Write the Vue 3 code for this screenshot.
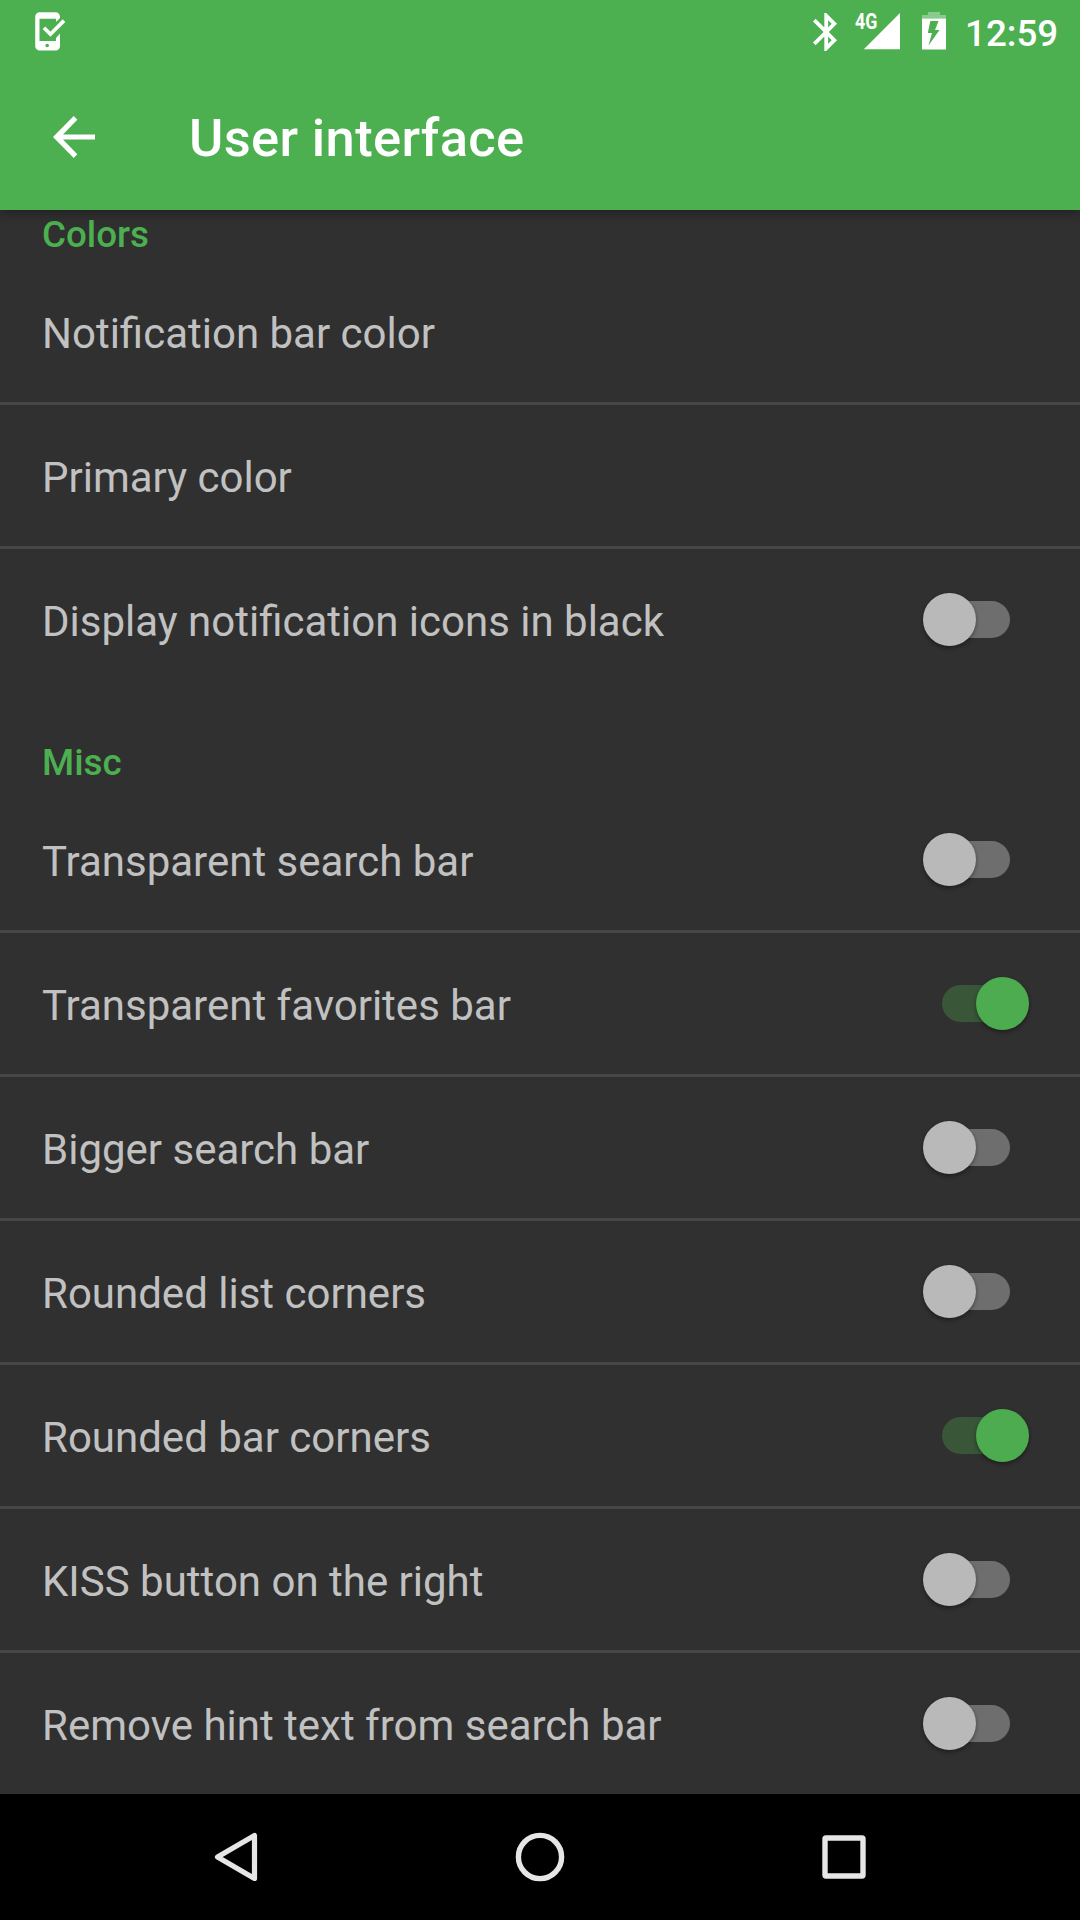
<script setup>
const sections = [
  {
    title: 'Colors',
    items: [
      { label: 'Notification bar color' },
      { label: 'Primary color' },
      { label: 'Display notification icons in black', on: false },
    ],
  },
  {
    title: 'Misc',
    items: [
      { label: 'Transparent search bar', on: false },
      { label: 'Transparent favorites bar', on: true },
      { label: 'Bigger search bar', on: false },
      { label: 'Rounded list corners', on: false },
      { label: 'Rounded bar corners', on: true },
      { label: 'KISS button on the right', on: false },
      { label: 'Remove hint text from search bar', on: false },
    ],
  },
]
</script>

<template>
  <div class="screen">
    <header class="top">
      <div class="status">
        <svg class="task" width="32" height="42" viewBox="0 0 32 42">
          <path fill="#fff" fill-rule="evenodd" d="M6 2.3H20.500C23 2.300 25 4.300 25 6.800V8L21.500 11.500H21V8.700H4.500V31H21V28L25 23.500V36C25 38.500 23 40.600 20.500 40.600H5C2.300 40.600 .2 38.500 .2 36V6.800C.2 4.300 2.300 2.300 5 2.300Z" />
          <path fill="none" stroke="#fff" stroke-width="3.700" d="M9 17.800L15.400 24.200L29 10.600" />
          <circle cx="12.200" cy="35.500" r="1.800" fill="#4caf50" />
        </svg>
        <span class="spacer"></span>
        <svg class="bt" width="24" height="38" viewBox="5 2 12.710 20" preserveAspectRatio="none">
          <path fill="#fff" d="M17.710 7.710L12 2h-1v7.590L6.410 5 5 6.410 10.590 12 5 17.590 6.410 19 11 14.410V22h1l5.710-5.710-4.300-4.290 4.300-4.290zM13 5.830l1.880 1.880L13 9.590V5.830zm1.880 10.460L13 18.170v-3.760l1.880 1.880z" />
        </svg>
        <div class="signal">
          <span class="net">4G</span>
          <svg width="37" height="37" viewBox="0 0 37 37"><path fill="#fff" d="M37 0V36.200H.8Z" /></svg>
        </div>
        <svg class="battery" width="24" height="38" viewBox="0 0 24 38">
          <path fill="#fff" fill-opacity=".35" d="M6 0H18V3H24V6.500H0V3H6Z" />
          <path fill="#fff" fill-rule="evenodd" d="M0 6.500H24V37.500H0ZM8.300 9H16.500L13 18H17.500L6.500 33.500L10 21H5.800Z" />
        </svg>
        <span class="clock">12:59</span>
      </div>
      <div class="bar">
        <svg class="back" width="42" height="42" viewBox="0 0 42 42">
          <path fill="#fff" d="M42 18.400V23.600H10L24.300 38.200L20.700 41.900L0 21L20.700 .1L24.300 3.800L10 18.400Z" />
        </svg>
        <h1>User interface</h1>
      </div>
    </header>

    <main class="list">
      <section v-for="s in sections" :key="s.title">
        <h2>{{ s.title }}</h2>
        <div v-for="item in s.items" :key="item.label" class="row">
          <span class="label">{{ item.label }}</span>
          <span v-if="item.on !== undefined" class="switch" :class="{ on: item.on }"><i></i></span>
        </div>
      </section>
    </main>

    <nav class="nav">
      <svg width="50" height="54" viewBox="0 0 50 54">
        <path fill="none" stroke="#e6e6e6" stroke-width="5.200" stroke-linejoin="round" d="M43.500 5.500V48.500L6.500 27Z" />
      </svg>
      <svg width="50" height="50" viewBox="0 0 50 50">
        <circle cx="25" cy="25" r="21.600" fill="none" stroke="#e6e6e6" stroke-width="5.400" />
      </svg>
      <svg width="50" height="50" viewBox="0 0 50 50">
        <rect x="6" y="6" width="38" height="38" rx="1" fill="none" stroke="#e6e6e6" stroke-width="5.400" />
      </svg>
    </nav>
  </div>
</template>

<style>
body {
  background: #303030;
}
</style>

<style scoped>
.screen {
  width: 1080px;
  height: 1920px;
  display: flex;
  flex-direction: column;
  overflow: hidden;
  background: #303030;
  font-family: Roboto, "Noto Sans", sans-serif;
}
.top {
  position: relative;
  z-index: 1;
  flex: none;
  height: 210px;
  background: #4caf50;
  box-shadow: 0 3px 10px rgba(0, 0, 0, 0.35);
  color: #fff;
}
.status {
  height: 63px;
  display: flex;
  align-items: flex-start;
  padding: 0 22px 0 35px;
}
svg {
  display: block;
  flex: none;
}
.task {
  margin-top: 10px;
}
.spacer {
  flex: 1;
}
.bt {
  margin: 13px 16px 0 0;
}
.signal {
  position: relative;
  width: 47px;
  margin: 13px 22px 0 0;
  display: flex;
  justify-content: flex-end;
}
.net {
  position: absolute;
  left: 2px;
  top: -1px;
  font-size: 22px;
  line-height: 20px;
  font-weight: 700;
  transform: scaleX(0.81);
  transform-origin: left;
}
.battery {
  margin: 12px 19px 0 0;
}
.clock {
  width: 93px;
  font-size: 36.75px;
  line-height: 43px;
  font-weight: 500;
  margin-top: 12px;
  white-space: nowrap;
}
.bar {
  height: 147px;
  display: flex;
  align-items: center;
  padding-left: 53px;
}
h1 {
  margin: 3px 0 0 94px;
  font-size: 52.5px;
  line-height: 62px;
  font-weight: 500;
  letter-spacing: 0.35px;
}
.list {
  flex: 1;
  margin-top: -48px;
  overflow: hidden;
}
h2 {
  box-sizing: border-box;
  height: 99px;
  margin: 0;
  padding: 51px 42px 0;
  font-size: 36.75px;
  line-height: 43px;
  font-weight: 500;
  color: #4caf50;
}
.row {
  height: 141px;
  display: flex;
  align-items: center;
  justify-content: space-between;
  padding: 0 70px 0 42px;
}
.row + .row {
  border-top: 3px solid #474747;
}
.label {
  font-size: 42px;
  line-height: 50px;
  padding-top: 5px;
  color: #c1c1c1;
}
.switch {
  position: relative;
  width: 68px;
  height: 37px;
  border-radius: 19px;
  background: #6e6e6e;
}
.switch i {
  position: absolute;
  left: -19px;
  top: -8px;
  width: 53px;
  height: 53px;
  border-radius: 50%;
  background: #b9b9b9;
  box-shadow: 0 2px 4px rgba(0, 0, 0, 0.4);
}
.switch.on {
  background: #395639;
}
.switch.on i {
  left: 34px;
  background: #4cac4f;
}
.nav {
  flex: none;
  height: 126px;
  box-sizing: border-box;
  padding: 0 211px;
  display: flex;
  align-items: center;
  justify-content: space-between;
  background: #000;
}
</style>
